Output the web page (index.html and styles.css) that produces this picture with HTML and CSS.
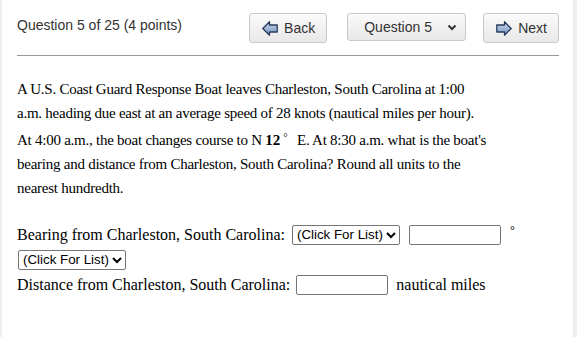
FILE: index.html
```html
<!DOCTYPE html>
<html>
	<head>
		<meta charset="utf-8">
		<link rel="stylesheet" href="styles.css">
	</head>
	<body><div id="Content">
		<div class="qHead">
			<div class="qTitle">Question 5 of 25 (4 points)</div>
			<div class="qNav">
				<button class="navBtn">
					<svg width="16" height="15" viewBox="0 0 16 15"><defs><linearGradient id="ag" x1="0" y1="0" x2="0" y2="1"><stop offset="0" stop-color="#c8d7ec"/><stop offset="1" stop-color="#7897c2"/></linearGradient></defs><path d="M0.8 7.5 L7.5 0.8 L7.5 4 L15.2 4 L15.2 11 L7.5 11 L7.5 14.2 Z" fill="url(#ag)" stroke="#283a5a" stroke-width="1.3" stroke-linejoin="round"/></svg>
					Back
				</button>
				<div class="qPick">
					<span>Question 5</span>
					<svg width="10" height="7" viewBox="0 0 10 7"><path d="M1.5 1.5 L5 5 L8.5 1.5" fill="none" stroke="#333" stroke-width="2"/></svg>
				</div>
				<button class="navBtn">
					<svg width="16" height="15" viewBox="0 0 16 15"><path d="M15.2 7.5 L8.5 0.8 L8.5 4 L0.8 4 L0.8 11 L8.5 11 L8.5 14.2 Z" fill="url(#ag)" stroke="#283a5a" stroke-width="1.3" stroke-linejoin="round"/></svg>
					Next
				</button>
			</div>
		</div>

		<div class="qText">
			A U.S. Coast Guard Response Boat leaves Charleston, South Carolina at 1:00 a.m. heading due east at an average speed of 28 knots (nautical miles per hour). At 4:00 a.m., the boat changes course to N <b>12</b><span class="deg">&deg;</span> E. At 8:30 a.m. what is the boat's bearing and distance from Charleston, South Carolina? Round all units to the nearest hundredth.
		</div>

		<div class="answers">
			<div class="ansLine">
				Bearing from Charleston, South Carolina:
				<select class="pick"><option>(Click For List)</option></select>
				<input type="text" class="num">
				<span class="degMark">&deg;</span>
			</div>
			<div class="ansLine">
				<select class="pick"><option>(Click For List)</option></select>
			</div>
			<div class="ansLine">
				Distance from Charleston, South Carolina:
				<input type="text" class="num">
				nautical miles
			</div>
		</div>
	</div></body>
</html>
```

FILE: styles.css
```css
body {
	margin: 0;
	background: #eeeeee;
}
#Content {
	margin: 0 4px 0 2px;
	min-height: 337px;
	background: white;
	padding: 0 14px 0 15px;
	box-sizing: border-box;
}
.qHead {
	display: flex;
	align-items: center;
	padding: 13px 0 12px 0;
	border-bottom: 1px solid #999;
	font-family: "Liberation Sans", Arial, sans-serif;
	font-size: 14px;
	color: #333;
}
.qTitle {
	margin-top: -6px;
}
.qNav {
	margin-left: auto;
	display: flex;
	align-items: flex-start;
	gap: 20px;
}
.navBtn {
	display: flex;
	align-items: center;
	gap: 6px;
	height: 30px;
	padding: 0 11px 0 12px;
	border: 1px solid #c8c8c8;
	border-radius: 3px;
	background: linear-gradient(#fafafa, #e8e8e8);
	font-family: "Liberation Sans", Arial, sans-serif;
	font-size: 14px;
	color: #333;
	cursor: pointer;
}
.navBtn:first-child {
	margin-left: 2px;
}
.qPick {
	display: flex;
	align-items: center;
	justify-content: space-between;
	box-sizing: border-box;
	width: 119px;
	height: 28px;
	padding: 0 8px 0 16px;
	border: 1px solid #c8c8c8;
	border-radius: 3px;
	background: linear-gradient(#fafafa, #e8e8e8);
	margin-right: -3px;
}
.qText {
	font-family: "Liberation Serif", "Times New Roman", serif;
	font-size: 15px;
	letter-spacing: -0.25px;
	line-height: 24px;
	color: black;
	width: 474px;
	margin-top: 21px;
}
.qText b {
	font-weight: bold;
	letter-spacing: 0;
}
.deg {
	vertical-align: 4px;
	font-size: 11px;
	margin: 0 6px 0 3px;
}
.answers {
	margin-top: 22px;
	font-family: "Liberation Serif", "Times New Roman", serif;
	font-size: 16px;
	color: black;
}
.ansLine {
	height: 25px;
	display: flex;
	align-items: center;
	gap: 6px;
	white-space: nowrap;
}
.pick {
	font-family: "Liberation Sans", Arial, sans-serif;
	font-size: 13.33px;
	height: 20px;
	padding: 0;
	border: 1px solid #767676;
	border-radius: 2px;
	background: white;
	color: black;
	margin-right: 3px;
}
.ansLine > .pick:first-child {
	margin-left: 1px;
}
.num {
	width: 92px;
	height: 20px;
	box-sizing: border-box;
	border: 1px solid #767676;
	border-radius: 2px;
	margin-right: 2px;
}
.degMark {
	font-size: 12px;
	align-self: flex-start;
	margin: 1px 0 0 1px;
}
```
